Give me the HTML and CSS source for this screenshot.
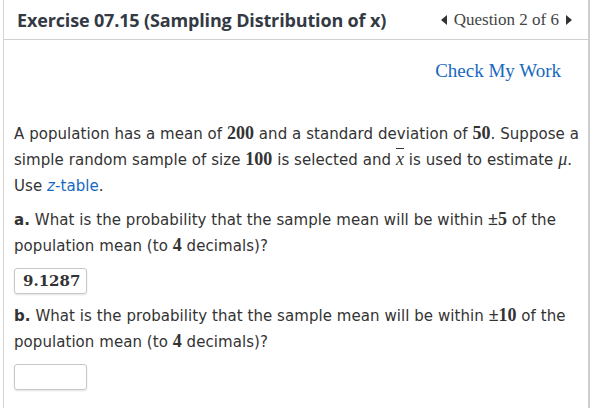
FILE: index.html
```html
<!DOCTYPE html>
<html>
<head>
<meta charset="utf-8">
<link rel="stylesheet" href="styles.css">
</head>
<body>
<div class="frame">
  <div class="header">
    <h1 class="title">Exercise 07.15 (Sampling Distribution of x)</h1>
    <div class="nav">
      <span class="arrow left"></span>
      <span class="qnum">Question 2 of 6</span>
      <span class="arrow right"></span>
    </div>
  </div>
  <div class="content">
    <div class="check"><a class="check-link">Check My Work</a></div>
    <p class="para">A population has a mean of <span class="m">200</span> and a standard deviation of <span class="m">50</span>. Suppose a simple random sample of size <span class="m">100</span> is selected and <span class="mi xbar">x</span> is used to estimate <span class="mi">μ</span>. Use <a class="link"><i>z</i>-table</a>.</p>
    <p class="para"><b>a.</b> What is the probability that the sample mean will be within <span class="m">±5</span> of the population mean (to <span class="m">4</span> decimals)?</p>
    <div class="answer">9.1287</div>
    <p class="para"><b>b.</b> What is the probability that the sample mean will be within <span class="m">±10</span> of the population mean (to <span class="m">4</span> decimals)?</p>
    <div class="answer"></div>
  </div>
</div>
</body>
</html>
```
FILE: styles.css
```css
html, body { margin: 0; padding: 0; background: #fff; }
body { width: 591px; height: 408px; overflow: hidden; }
.frame {
  margin-left: 3px;
  width: 584px;
  height: 408px;
  border-left: 1px solid #d6d6d6;
  border-right: 2px solid #cfcfcf;
}
.header {
  display: flex;
  align-items: center;
  justify-content: space-between;
  height: 39px;
  border-bottom: 1px solid #d0d0d0;
  padding: 0 16px 0 13px;
}
.title {
  margin: 0;
  font-family: "Open Sans", sans-serif;
  font-weight: 700;
  font-size: 18px;
  color: #333a44;
  letter-spacing: -0.15px;
}
.nav {
  display: flex;
  align-items: center;
  gap: 7px;
  font-family: "Liberation Serif", serif;
  font-size: 17px;
  color: #444;
}
.arrow { width: 0; height: 0; border-top: 5px solid transparent; border-bottom: 5px solid transparent; }
.arrow.left { border-right: 6px solid #333; }
.arrow.right { border-left: 6px solid #333; }
.content { padding: 0 2px 0 10px; font-family: "DejaVu Sans", Verdana, sans-serif; font-size: 15px; color: #333; letter-spacing: 0.06px; }
.check { display: flex; justify-content: flex-end; padding: 20px 25px 0 0; height: 22px; margin-bottom: 39px; letter-spacing: 0; }
.check-link { font-family: "Liberation Serif", serif; font-size: 19px; line-height: 22px; color: #1668c0; }
.para { margin: 8px 0 0 0; line-height: 26px; }
.check + .para { margin-top: 0; }
.m { font-family: "Liberation Serif", serif; font-weight: 700; font-size: 18px; line-height: 1; letter-spacing: 0; }
.mi { font-family: "Liberation Serif", serif; font-style: italic; font-size: 18px; line-height: 1; letter-spacing: 0; }
.xbar { text-decoration: overline; }
.link { color: #1668c0; }
.para b { color: #333; }
.answer {
  width: 73px; height: 26px;
  border: 1px solid #c8c8c8;
  border-radius: 3px;
  box-shadow: 0 1px 2px rgba(0,0,0,0.12);
  margin: 9px 0 9px 0;
  font-family: "DejaVu Serif", serif; font-weight: 700; font-size: 15px; color: #333; letter-spacing: 0;
  display: flex; align-items: center; padding-left: 8px; box-sizing: border-box;
}
.answer + .para { margin-top: 0; }
```
